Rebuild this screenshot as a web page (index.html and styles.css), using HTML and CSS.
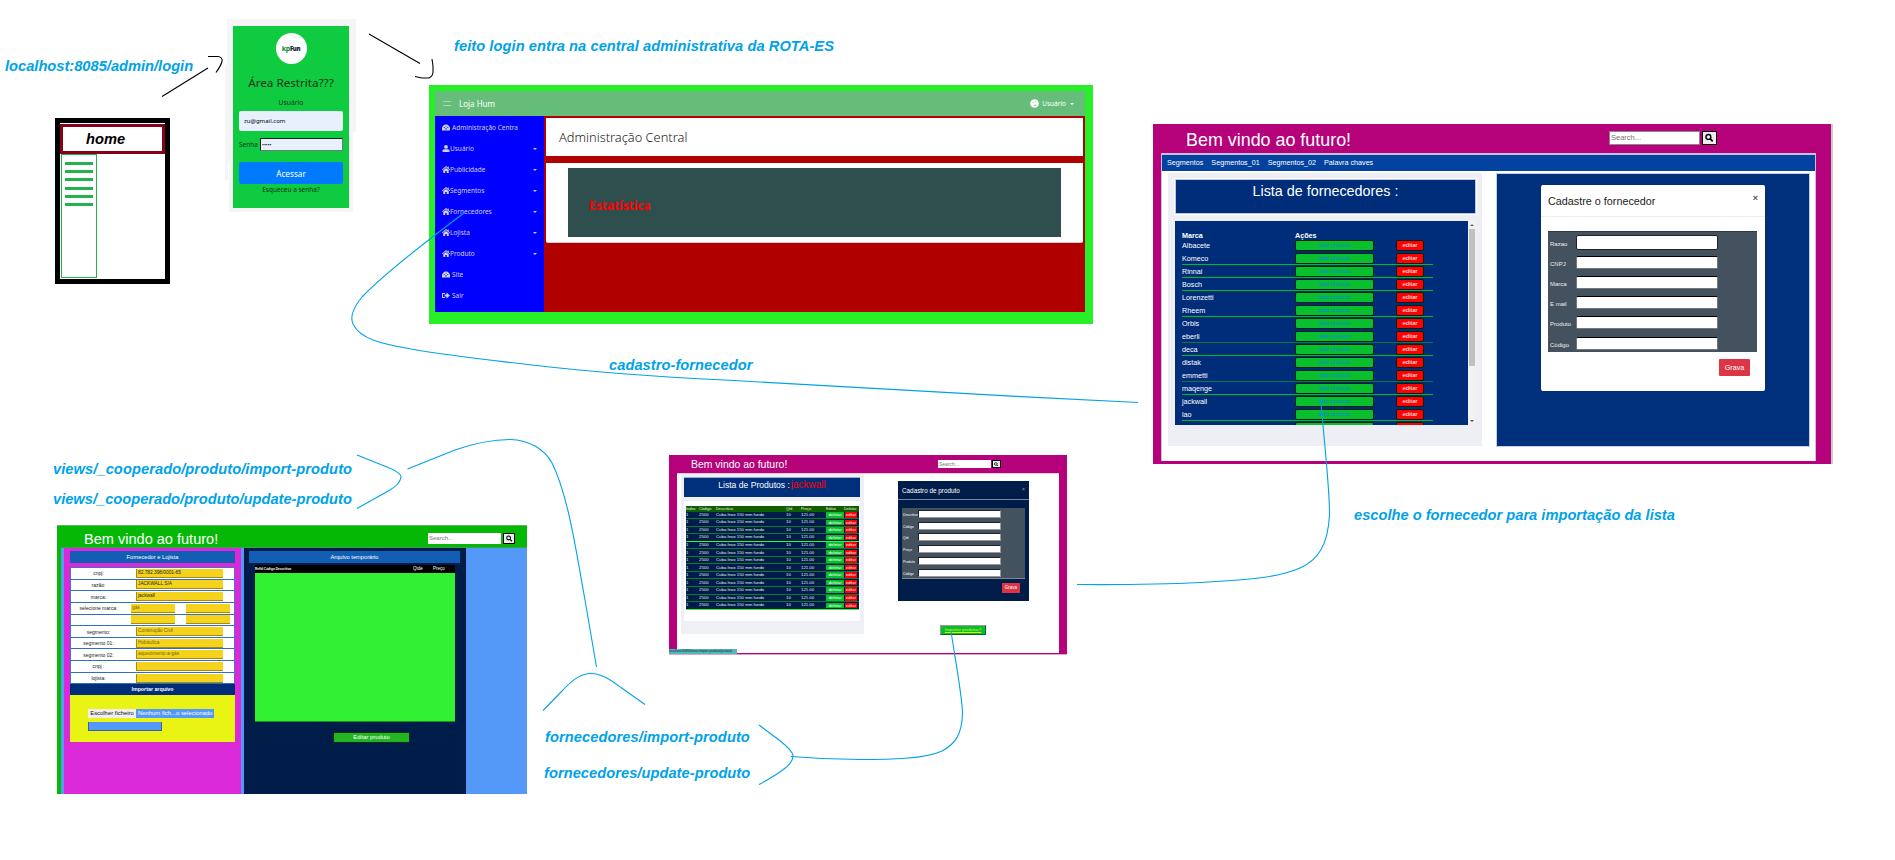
FILE: index.html
```html
<!DOCTYPE html>
<html lang="pt">
<head>
<meta charset="utf-8">
<title>Fluxo ROTA-ES</title>
<link rel="stylesheet" href="styles.css">
</head>
<body>
<svg width="0" height="0" class="defs">
  <symbol id="home" viewBox="0 0 16 14"><path d="M8 0 0 7l1 1.300L8 2.500l7 5.800L16 7l-2.500-2.200V1h-2v2z"/><path d="M8 4 2.500 8.500V14h4v-4h3v4h4V8.500z"/></symbol>
  <symbol id="user" viewBox="0 0 16 14"><circle cx="8" cy="3.800" r="3.800"/><path d="M1 14v-2.500C1 9.500 3 8.500 5 8.500h6c2 0 4 1 4 3V14z"/></symbol>
  <symbol id="dash" viewBox="0 0 18 14"><path fill-rule="evenodd" d="M0 14V7l2-3 3-3 4-1 4 1 3 3 2 3v7zM4 6v2h2V6zM8 3v2h2V3zM12 6v2h2V6zM8 8v4h2V8z"/></symbol>
  <symbol id="exit" viewBox="0 0 16 14"><path d="M0 2h6v2H2v6h4v2H0zM5 5h4V1l7 6-7 6V9H5z"/></symbol>
  <symbol id="lens" viewBox="0 0 12 12"><circle cx="4.800" cy="4.800" r="3.500" fill="none" stroke="#000" stroke-width="2"/><path d="m7.500 7.500 3.500 3.500" stroke="#000" stroke-width="2.400"/></symbol>
</svg>
<main class="canvas">

  <section class="node home-node">
    <header class="home-title">home</header>
    <div class="home-side"><i></i><i></i><i></i><i class="gap"></i><i></i><i></i></div>
  </section>

  <svg class="node login-shade" width="132" height="194"><path fill="#f5f5f5" d="M2 0h129v113h-3v80H4v-48H3v16H0V46h2z"/></svg>
  <section class="node login">
    <div class="logo"><span>kp</span><b>Fun</b></div>
    <h2>Área Restrita???</h2>
    <label>Usuário</label>
    <div class="login-user">zu@gmail.com</div>
    <div class="login-pass"><span>Senha</span><div>•••••</div></div>
    <div class="login-btn">Acessar</div>
    <small>Esqueceu a senha?</small>
  </section>

  <section class="node admin">
    <header class="admin-bar"><i class="burger"></i><span>Loja Hum</span><svg class="avatar" viewBox="0 0 10 10"><circle cx="5" cy="5" r="4.800" fill="#fff"/><path d="M3 4h1m2-1h1M4 7h3" stroke="#66bd7a"/></svg><em>Usuário</em><i class="caret"></i></header>
    <div class="admin-body">
      <nav class="side">
        <div><svg><use href="#dash"/></svg><span class="sp">Administração Centra</span></div>
        <div><svg><use href="#user"/></svg><span>Usuário</span><i class="caret"></i></div>
        <div><svg><use href="#home"/></svg><span>Publicidade</span><i class="caret"></i></div>
        <div><svg><use href="#home"/></svg><span>Segmentos</span><i class="caret"></i></div>
        <div><svg><use href="#home"/></svg><span>Fornecedores</span><i class="caret"></i></div>
        <div><svg><use href="#home"/></svg><span>Lojista</span><i class="caret"></i></div>
        <div><svg><use href="#home"/></svg><span>Produto</span><i class="caret"></i></div>
        <div><svg><use href="#dash"/></svg><span class="sp">Site</span></div>
        <div><svg><use href="#exit"/></svg><span class="sp">Sair</span></div>
      </nav>
      <div class="admin-main">
        <div class="admin-title">Administração Central</div>
        <div class="stat-card"><div class="stat">Estatística</div></div>
      </div>
    </div>
  </section>

  <section class="node forn">
    <header class="forn-head"><h1>Bem vindo ao futuro!</h1><div class="search">Search...</div><div class="go"><svg><use href="#lens"/></svg></div></header>
    <div class="forn-page">
      <nav class="forn-nav"><span>Segmentos</span><span>Segmentos_01</span><span>Segmentos_02</span><span>Palavra chaves</span></nav>
      <div class="forn-cols">
        <div class="forn-list">
          <div class="forn-list-title">Lista de fornecedores :</div>
          <div class="forn-scroll">
            <div class="forn-table">
              <div class="fr fh"><b>Marca</b><b>Ações</b></div>
              <div class="fr"><span>Albacete</span><u>add produto</u><s>editar</s></div>
              <div class="fr ln"><span>Komeco</span><u>add produto</u><s>editar</s></div>
              <div class="fr ln"><span>Rinnai</span><u>add produto</u><s>editar</s></div>
              <div class="fr ln"><span>Bosch</span><u>add produto</u><s>editar</s></div>
              <div class="fr"><span>Lorenzetti</span><u>add produto</u><s>editar</s></div>
              <div class="fr ln"><span>Rheem</span><u>add produto</u><s>editar</s></div>
              <div class="fr"><span>Orbis</span><u>add produto</u><s>editar</s></div>
              <div class="fr ln dim"><span>eberli</span><u>add produto</u><s>editar</s></div>
              <div class="fr ln"><span>deca</span><u>add produto</u><s>editar</s></div>
              <div class="fr"><span>distak</span><u>add produto</u><s>editar</s></div>
              <div class="fr ln dim"><span>emmetti</span><u>add produto</u><s>editar</s></div>
              <div class="fr ln"><span>maqenge</span><u>add produto</u><s>editar</s></div>
              <div class="fr"><span>jackwall</span><u>add produto</u><s>editar</s></div>
              <div class="fr ln"><span>lao</span><u>add produto</u><s>editar</s></div>
              <div class="fr"><span>viqtall</span><u>add produto</u><s>editar</s></div>
            </div>
            <div class="bar"><i class="up"></i><i class="thumb"></i><i class="down"></i></div>
          </div>
        </div>
        <div class="forn-right">
          <div class="modal">
            <div class="modal-head"><span>Cadastre o fornecedor</span><b>×</b></div>
            <div class="modal-form">
              <div><label>Razao</label><i class="focus"></i></div>
              <div><label>CNPJ</label><i></i></div>
              <div><label>Marca</label><i></i></div>
              <div><label>E mail</label><i></i></div>
              <div><label>Produto</label><i></i></div>
              <div><label>Código</label><i></i></div>
            </div>
            <div class="grava">Grava</div>
          </div>
        </div>
      </div>
    </div>
  </section>

  <section class="node prod">
    <header class="prod-head"><h1>Bem vindo ao futuro!</h1><div class="search">Search...</div><div class="go"><svg><use href="#lens"/></svg></div></header>
    <div class="prod-page">
      <div class="prod-list">
        <div class="prod-title">Lista de Produtos : <span>jackwall</span></div>
        <div class="prod-box">
          <div class="pr ph"><span>Index</span><span>Código</span><span>Descritivo</span><span>Qtd</span><span>Preço</span><span>Editar</span><span>Deletar</span></div>
          <div class="pr"><span>1</span><span>2500</span><span>Cuba Inox 150 mm fundo</span><span>10</span><span>121.00</span><u>deletar</u><s>editar</s></div>
          <div class="pr"><span>1</span><span>2500</span><span>Cuba Inox 150 mm fundo</span><span>10</span><span>121.00</span><u>deletar</u><s>editar</s></div>
          <div class="pr"><span>1</span><span>2500</span><span>Cuba Inox 150 mm fundo</span><span>10</span><span>121.00</span><u>deletar</u><s>editar</s></div>
          <div class="pr lit"><span>1</span><span>2500</span><span>Cuba Inox 150 mm fundo</span><span>10</span><span>121.00</span><u>deletar</u><s>editar</s></div>
          <div class="pr"><span>1</span><span>2500</span><span>Cuba Inox 150 mm fundo</span><span>10</span><span>121.00</span><u>deletar</u><s>editar</s></div>
          <div class="pr"><span>1</span><span>2500</span><span>Cuba Inox 150 mm fundo</span><span>10</span><span>121.00</span><u>deletar</u><s>editar</s></div>
          <div class="pr"><span>1</span><span>2500</span><span>Cuba Inox 150 mm fundo</span><span>10</span><span>121.00</span><u>deletar</u><s>editar</s></div>
          <div class="pr"><span>1</span><span>2500</span><span>Cuba Inox 150 mm fundo</span><span>10</span><span>121.00</span><u>deletar</u><s>editar</s></div>
          <div class="pr"><span>1</span><span>2500</span><span>Cuba Inox 150 mm fundo</span><span>10</span><span>121.00</span><u>deletar</u><s>editar</s></div>
          <div class="pr"><span>1</span><span>2500</span><span>Cuba Inox 150 mm fundo</span><span>10</span><span>121.00</span><u>deletar</u><s>editar</s></div>
          <div class="pr"><span>1</span><span>2500</span><span>Cuba Inox 150 mm fundo</span><span>10</span><span>121.00</span><u>deletar</u><s>editar</s></div>
          <div class="pr"><span>1</span><span>2500</span><span>Cuba Inox 150 mm fundo</span><span>10</span><span>121.00</span><u>deletar</u><s>editar</s></div>
          <div class="pr lit"><span>1</span><span>2500</span><span>Cuba Inox 150 mm fundo</span><span>10</span><span>121.00</span><u>deletar</u><s>editar</s></div>
        </div>
      </div>
      <div class="prod-right">
        <div class="pm">
          <div class="pm-head"><span>Cadastro de produto</span><b>×</b></div>
          <div class="pm-form">
            <div><label>Descritivo</label><i></i></div>
            <div><label>Código</label><i></i></div>
            <div><label>Qtd</label><i></i></div>
            <div><label>Preço</label><i></i></div>
            <div><label>Produto</label><i></i></div>
            <div><label>Código</label><i></i></div>
          </div>
          <div class="pm-btn">Grava</div>
        </div>
        <div class="import-btn">Importar produtos?</div>
      </div>
    </div>
    <div class="status">localhost:8085/fornec/import-produto/jackwall</div>
  </section>

  <section class="node loja">
    <header class="loja-head"><h1>Bem vindo ao futuro!</h1><div class="search">Search...</div><div class="go"><svg><use href="#lens"/></svg></div></header>
    <div class="loja-page">
      <div class="loja-left">
        <div class="loja-title">Fornecedor e Lojista</div>
        <div class="loja-rows">
          <div><label>cnpj:</label><p>82.782.398/0001-65</p></div>
          <div><label>razão:</label><p>JACKWALL S/A</p></div>
          <div><label>marca:</label><p>jackwall</p></div>
          <div class="two"><label>selecione marca:</label><p class="soft">gás</p><p></p></div>
          <div class="two"><label></label><p></p><p></p></div>
          <div><label>segmento:</label><p class="soft">Construção Civil</p></div>
          <div><label>segmento 01:</label><p class="soft">Hidráulica</p></div>
          <div><label>segmento 02:</label><p class="soft">aquecimento-a-gás</p></div>
          <div><label>cnpj :</label><p></p></div>
          <div><label>lojista:</label><p></p></div>
        </div>
        <div class="loja-sub">Importar arquivo</div>
        <div class="loja-file">
          <div class="file-row"><span>Escolher ficheiro</span><em>Nenhum fich...o selecionado</em></div>
          <div class="file-btn"></div>
        </div>
      </div>
      <div class="loja-right">
        <div class="loja-title">Arquivo temporário</div>
        <div class="tmp-head"><b>RefId Código Descritivo</b><span>Qtde</span><span>Preço</span></div>
        <div class="tmp-body"></div>
        <div class="tmp-btn">Editar produto</div>
      </div>
    </div>
  </section>

  <svg class="wires" width="1895" height="860" viewBox="0 0 1895 860">
    <g class="ink">
      <path d="M162 96.500 208 68M208 56.500h10q5 1 4 5t-6 11"/>
      <path d="M369 34 420 63.500M415 76.500l7 1.500h7q4-2 4-6v-6l-1-7"/>
    </g>
    <path d="M464 213C420 246 383 275 362 297C352 309 350 317 353 324C360 339 382 344 411 349C450 356 490 360 532 365C600 373 660 377 725 380C860 388 1000 396 1138 402.500"/>
    <path d="M1320.500 397C1323 430 1330 490 1329.500 515C1328 545 1318 560 1300 568C1275 579 1240 580 1200 582.500Q1150 585 1077 584.500"/>
    <path d="M951 631C956 665 962 695 962.500 713C962 735 955 744 942 751C925 759 890 759.500 860 759.500Q825 759.500 791 756.500"/>
    <path d="M759 725 779 740Q793 751 793 756Q793 763 782 770.500Q773 777 759 784.500"/>
    <path d="M543 710.500 562 691C574 678 582 673.500 591 673.500C602 673.500 612 681 621 687.500L645 704.500"/>
    <path d="M357 455 382 465Q401 472 401 477Q400 484 390 490L357 508.500"/>
    <path d="M407.500 469 455 450C475 443 495 439.500 510 439.500C530 440 545 450 552 463C568 495 576 550 585 600L596.500 667"/>
  </svg>

  <p class="note n1">localhost:8085/admin/login</p>
  <p class="note n2">feito login entra na central administrativa da ROTA-ES</p>
  <p class="note n3">cadastro-fornecedor</p>
  <p class="note n4">views/_cooperado/produto/import-produto</p>
  <p class="note n5">views/_cooperado/produto/update-produto</p>
  <p class="note n6">fornecedores/import-produto</p>
  <p class="note n7">fornecedores/update-produto</p>
  <p class="note n8">escolhe o fornecedor para importação da lista</p>
</main>
</body>
</html>
```
FILE: styles.css
```css
* { box-sizing: border-box; margin: 0; padding: 0; }
html, body { background: #fff; }
body { width: 1895px; height: 860px; overflow: hidden; font-family: "Liberation Sans", Arial, sans-serif; }
.defs { position: absolute; }
.canvas { position: relative; width: 1895px; height: 860px; overflow: hidden; }
.node { position: absolute; white-space: nowrap; }
i, em { font-style: normal; display: block; }
u, s { text-decoration: none; }
h1, h2 { font-weight: 400; }

/* hand-written notes and connectors */
.note { position: absolute; font: italic 700 14.667px/17px "Liberation Sans", Arial, sans-serif; color: #00a2e8; white-space: nowrap; }
.n1 { left: 5px; top: 58px; }
.n2 { left: 454px; top: 38px; letter-spacing: .06px; }
.n3 { left: 609px; top: 357px; letter-spacing: .05px; }
.n4 { left: 53px; top: 461px; letter-spacing: .07px; }
.n5 { left: 53px; top: 491px; }
.n6 { left: 545px; top: 729px; letter-spacing: .08px; }
.n7 { left: 544px; top: 765px; letter-spacing: .04px; }
.n8 { left: 1354px; top: 507px; }
.wires { position: absolute; left: 0; top: 0; }
.wires path { fill: none; stroke: #00a2e8; stroke-width: 1.1; }
.wires .ink path { stroke: #000; }

/* home sketch */
.home-node { left: 55px; top: 118px; width: 115px; height: 166px; border: 5px solid #000; padding-top: 1px; }
.home-title { height: 30px; border: 3px solid #880015; padding-left: 23px; font: italic 700 14.667px/25px "Liberation Sans", Arial, sans-serif; color: #000; }
.home-side { margin-left: 1px; width: 36px; height: 124px; border: 1px solid #22b14c; padding: 7px 3px; display: flex; flex-direction: column; gap: 5px; }
.home-side i { height: 3px; background: #22b14c; }
.home-side .gap { margin-top: 1px; }

/* login */
.login-shade { left: 225px; top: 19px; }
.login { left: 233px; top: 26px; width: 116px; height: 182px; background: #0fcb40; padding: 7px 6px 0; display: flex; flex-direction: column; align-items: center; font: 7.300px/10px "Noto Sans", sans-serif; color: #17331f; }
.logo { width: 31px; height: 31px; border-radius: 50%; background: #fff; display: flex; justify-content: center; align-items: center; font: 700 7px/10px "Noto Sans", sans-serif; color: #0a8a2c; letter-spacing: -.3px; }
.logo b { color: #123; font-size: 6px; }
.login h2 { font-size: 11.650px; line-height: 18px; margin-top: 10px; }
.login label { margin-top: 6px; font-size: 6.800px; }
.login-user { align-self: stretch; height: 20px; margin-top: 3px; border-radius: 2px; background: #e8f0fe; padding-left: 5px; font-size: 6px; line-height: 21px; color: #000; }
.login-pass { align-self: stretch; display: flex; margin-top: 7px; height: 13px; line-height: 14px; font-size: 6.500px; }
.login-pass span { width: 21px; }
.login-pass div { flex: 1; background: #e8f0fe; border: 1px solid #222; border-right-color: #777; border-bottom-color: #777; padding-left: 1px; line-height: 12px; color: #000; font-size: 5px; }
.login-btn { align-self: stretch; height: 22px; margin-top: 11px; border-radius: 2px; background: #007bff; color: #fff; text-align: center; font-size: 8.200px; line-height: 23px; }
.login small { font-size: 6.500px; line-height: 11px; }

/* admin */
.admin { left: 429px; top: 85px; width: 664px; height: 239px; background: #28f028; padding: 6px 8px 12px 6px; font-family: "Noto Sans", sans-serif; }
.admin-bar { height: 25px; background: #66bd7a; display: flex; align-items: center; padding: 0 11px 0 8px; color: #fff; font-size: 8px; line-height: 12px; }
.burger { width: 8px; height: 5px; border: solid #a9dab3; border-width: 1px 0; }
.admin-bar span { margin-left: 8px; flex: 1; }
.avatar { width: 9px; height: 9px; }
.admin-bar em { margin: 0 4px 0 3px; font-size: 6.500px; }
.caret { border: 2px solid transparent; border-top: 2.500px solid #fff; border-bottom: 0; }
.admin-body { display: flex; height: 196px; }
.side { width: 109px; background: #00f; padding: 1px 7px 0 7px; color: #d0d0ea; font-size: 6.500px; line-height: 21px; }
.side div { display: flex; align-items: center; height: 21px; }
.side svg { width: 8px; height: 7px; fill: #d0d0d8; }
.side .sp { padding-left: 2px; }
.side .caret { margin: 0 0 0 auto; border-top-color: #d0d0e8; }
.admin-main { flex: 1; background: #b00000; padding: 2px; }
.admin-title { height: 38px; background: #fff; padding-left: 13px; font: 300 12.850px/38px "Noto Sans", sans-serif; color: #222; }
.stat-card { margin-top: 7px; height: 80px; background: #fff; border-bottom: 1px solid #ccc; border-radius: 0 0 2px 2px; padding: 5px 22px 0; }
.stat { height: 69px; background: #2f4f4f; padding-left: 21px; font-weight: 700; font-size: 11.900px; line-height: 75px; color: #f00; }

/* shared search box */
.search { background: #fff; color: #777; }
.go { background: #eee; border: 1px solid #000; display: flex; align-items: center; justify-content: center; }
.go svg { width: 65%; height: 80%; }

/* suppliers */
.forn { left: 1153px; top: 124px; width: 680px; height: 340px; background: #b5027a; padding: 0 15px 0 8px; border-right: 2px solid #ccc; }
.forn-head { display: flex; height: 29px; padding: 7px 0 0 25px; color: #fff; }
.forn-head h1 { width: 423px; font-size: 17.900px; line-height: 19px; }
.forn-head .search { width: 91px; height: 14px; font-size: 7.500px; padding-left: 1px; border: 1px solid #888; line-height: 12px; }
.forn-head .go { width: 15px; height: 14px; margin-left: 2px; }
.forn-page { height: 308px; background: #fff; border: 1px solid #c8c0e0; border-width: 2px 1px 0; }
.forn-nav { height: 16px; background: #03439f; color: #fff; display: flex; gap: 8px; padding-left: 5px; font-size: 7.200px; line-height: 15px; }
.forn-cols { display: flex; gap: 14px; padding: 2px 6px; }
.forn-list { flex: none; width: 314px; height: 273px; background: #eeeff4; padding: 6px 6px 0 7px; }
.forn-list-title { height: 35px; background: #002d7a; border: 1px solid #b9c8e0; outline: 1px solid #fff; color: #fff; text-align: center; font-size: 14.350px; line-height: 22px; }
.forn-scroll { display: flex; margin-top: 7px; height: 204px; overflow: hidden; }
.forn-table { flex: 1; background: #002d7a; padding: 9px 33px 0 7px; color: #fff; overflow: hidden; }
.fr { display: grid; grid-template-columns: 113px 79px 28px; width: 251px; align-items: center; height: 13px; font-size: 7.200px; line-height: 11px; border-bottom: 1px solid transparent; }
.fr.fh { height: 9px; }
.fr.ln { border-color: #0b2; }
.fr.ln.dim { border-color: #087a4a; }
.fr u, .fr s { height: 11px; line-height: 9px; border: 1px solid #03230f; border-radius: 2px; text-align: center; font-size: 6px; }
.fr u { background: #0abf2d; color: #0a86d8; }
.fr s { background: #f00; color: #fff; margin-left: 22px; width: 28px; }
.bar { width: 8px; background: #f1f1f1; padding: 3px 1px; display: flex; flex-direction: column; align-items: center; }
.up { border: 2px solid transparent; border-top: 0; border-bottom-color: #666; }
.thumb { width: 6px; height: 137px; margin-top: 3px; background: #c1c1c1; }
.down { margin-top: auto; border: 2px solid transparent; border-bottom: 0; border-top-color: #555; }
.forn-right { flex: none; width: 314px; height: 274px; background: #002f7b; border: 1px solid #c5cfe4; padding: 11px 0 0 44px; }
.modal { width: 224px; height: 206px; background: #fff; border-radius: 2px; }
.modal-head { display: flex; justify-content: space-between; height: 32px; border-bottom: 1px solid #eee; padding: 9px 7px 0 7px; font-size: 10.800px; line-height: 15px; color: #222; }
.modal-head b { line-height: 9px; font-size: 9px; color: #555; }
.modal-form { margin: 14px 8px 0 7px; height: 121px; background: #44525f; border-top: 1px solid #2c3946; }
.modal-form div { display: flex; align-items: center; height: 20.200px; padding-left: 2px; }
.modal-form label { width: 26px; font-size: 6px; line-height: 10px; padding-top: 3px; color: #eee; }
.modal-form i { width: 142px; height: 13px; background: #fff; border: 1px solid #777; border-top-color: #000; border-radius: 2px; }
.modal-form .focus { height: 15px; border: 1px solid #222; }
.grava { margin: 7px 0 0 178px; width: 31px; height: 17px; border-radius: 1px; background: #dc3545; color: #fff; text-align: center; font-size: 7.200px; line-height: 18px; }

/* products */
.prod { left: 669px; top: 455px; width: 398px; height: 200px; background: #b5027a; padding: 0 8px; border-bottom: 1px solid #dba9cc; }
.prod-head { display: flex; height: 18px; padding: 5px 0 0 14px; color: #fff; }
.prod-head h1 { width: 247px; font-size: 10.450px; line-height: 10px; }
.prod-head .search { width: 53px; height: 8px; font-size: 5px; line-height: 8px; padding-left: 1px; }
.prod-head .go { width: 9px; height: 8px; margin-left: 1px; }
.prod-page { display: flex; height: 180px; background: #fff; border-top: 1px solid #e6c9de; padding-left: 4px; }
.prod-list { width: 183px; height: 160px; background: #eff0f5; padding: 3px 4px 0 3px; }
.prod-title { height: 20px; background: #002f7b; color: #fff; text-align: center; font-size: 8.600px; line-height: 14px; border-top: 1px solid #9aabc8; }
.prod-title span { color: #f00; font-size: 10px; margin-left: -1.500px; }
.prod-box { margin-top: 4px; height: 120px; background: #fff; padding: 5px 1px 0 2px; }
.pr { display: grid; grid-template-columns: 13px 17px 70px 15px 25px 18px 13px; align-items: center; height: 7.550px; background: #001c48; border-bottom: 1px solid #087a35; color: #e6ecf5; font-size: 4.300px; line-height: 6px; }
.pr.ph { height: 5.500px; background: #106000; border: 0; font-size: 3.900px; }
.pr.lit { border-color: #2f3; }
.pr u, .pr s { height: 5.500px; line-height: 5.500px; text-align: center; color: #fff; }
.pr u { background: #0abf2d; }
.pr s { background: #f00; margin-left: 1px; font-size: 4px; }
.prod-right { padding: 7px 0 0 34px; }
.pm { width: 131px; height: 120px; background: #001c48; }
.pm-head { display: flex; justify-content: space-between; height: 19px; border-bottom: 1px solid #7686a5; padding: 5px 4px 0; color: #fff; font-size: 6.350px; line-height: 9px; }
.pm-head b { font-weight: 400; font-size: 5px; line-height: 6px; color: #9ab; }
.pm-form { margin: 8px 4px 0; height: 71px; background: #44525f; border-bottom: 1px solid #7d8790; }
.pm-form div { display: flex; align-items: center; height: 11.750px; padding-left: 1px; }
.pm-form label { flex: none; width: 15px; font-size: 3.400px; line-height: 6px; padding-top: 2px; color: #fff; }
.pm-form i { width: 83px; height: 8px; background: #fff; border: 1px solid #1a222a; border-color: #1a222a #999 #999 #1a222a; }
.pm-btn { margin: 4px 0 0 104px; width: 18px; height: 10px; background: #dc3545; color: #fff; text-align: center; font-size: 4.500px; line-height: 10px; }
.import-btn { margin: 24px 0 0 42px; width: 46px; height: 10px; background: #0abf2d; border: 1px solid #064; border-color: #999 #063 #063 #999; color: #e8f000; text-decoration: underline; text-align: center; font-size: 4.300px; line-height: 8px; }
.status { position: absolute; left: 0; bottom: 0; width: 68px; height: 5px; background: #52b8bd; color: #123; font-size: 3.150px; line-height: 5px; }

/* store */
.loja { left: 57px; top: 525px; width: 470px; height: 269px; background: #06b806; border-top: 1px solid #5bb85b; padding-left: 4px; }
.loja-head { display: flex; height: 21px; padding: 7px 0 0 23px; color: #fff; }
.loja-head h1 { width: 344px; font-size: 14.550px; line-height: 13px; }
.loja-head .search { width: 73px; height: 11px; font-size: 6px; line-height: 11px; padding-left: 1px; }
.loja-head .go { width: 12px; height: 11px; margin-left: 2px; }
.loja-page { display: flex; gap: 3px; height: 247px; background: #5498f8; border-top: 1px solid #3c9c60; padding-left: 3px; }
.loja-left { width: 177px; background: #da2ad8; padding: 3px 6px; }
.loja-title { height: 12px; background: #125eb5; color: #fff; font-size: 5.700px; line-height: 12px; text-align: center; }
.loja-rows { margin-top: 4px; height: 117px; background: #fff; border: solid #4a74c0; border-width: 1px 1px 0; }
.loja-rows div { display: flex; align-items: center; height: 11.650px; border-bottom: 1px solid #2f6fc0; }
.loja-rows label { width: 65px; padding-right: 10px; text-align: center; font-size: 5px; line-height: 8px; color: #222; }
.loja-rows p { width: 87px; height: 9px; background: #f5d31c; border: solid #a58c10; border-width: 0 0 1px 1px; padding-left: 1px; font-size: 4.800px; line-height: 8px; color: #222; }
.loja-rows .soft { color: #75650f; }
.loja-rows .two { gap: 11px; }
.loja-rows .two label { width: 60px; margin-right: -11px; padding-right: 5px; }
.loja-rows .two p { width: 44px; border-left: 0; }
.loja-sub { height: 11px; background: #002d7a; color: #fff; text-align: center; font: 700 5.300px/11px "Liberation Sans", Arial, sans-serif; }
.loja-file { height: 47px; background: #e9f314; padding: 14px 18px; }
.file-row { display: flex; font-size: 5.900px; line-height: 9px; width: 126px; }
.file-row span { width: 48px; background: #efefef; color: #111; text-align: center; }
.file-row em { flex: 1; background: #5498f8; color: #fff; padding-left: 2px; }
.file-btn { margin-top: 4px; width: 74px; height: 9px; background: #5498f8; border: solid #37639f; border-width: 0 1px 1px; }
.loja-right { width: 222px; background: #001c48; padding: 3px 6px 0 5px; }
.tmp-head { display: flex; margin: 2px 5px 0 6px; height: 8px; background: #000; color: #fff; font-size: 4.500px; line-height: 8px; }
.tmp-head b { width: 158px; font-size: 3.200px; }
.tmp-head span { width: 20px; }
.tmp-body { height: 149px; margin: 0 5px 0 6px; background: #32f032; border-bottom: 1px solid #159020; }
.tmp-btn { margin: 10px 0 0 84px; width: 77px; height: 11px; background: #22b522; border: 1px solid #052a18; color: #fff; text-align: center; font-size: 5.800px; line-height: 9px; }
```
